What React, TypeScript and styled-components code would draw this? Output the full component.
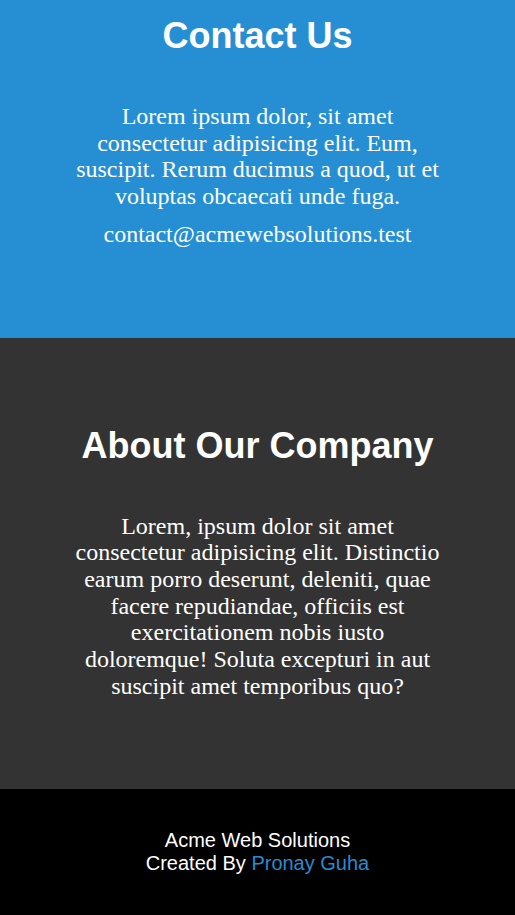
import styled, { createGlobalStyle } from 'styled-components';

const Global = createGlobalStyle`
  html, body {
    margin: 0;
    padding: 0;
  }

  body {
    font-family: "Liberation Serif", "Times New Roman", serif;
    color: #fff;
  }
`;

const Section = styled.section<{ $bg: string; $top: number; $bottom: number }>`
  background: ${p => p.$bg};
  padding: ${p => p.$top}px 0 ${p => p.$bottom}px;
  text-align: center;
`;

const Heading = styled.h1`
  margin: 0 0 47px;
  font-family: "Liberation Sans", Arial, sans-serif;
  font-size: 36px;
  font-weight: 700;
  line-height: 41px;
  color: #fff;
`;

const Content = styled.div`
  max-width: 372px;
  margin: 0 auto;
`;

const Text = styled.p`
  margin: 0;
  font-size: 24px;
  line-height: 26.7px;
  color: #fff;

  & + & {
    margin-top: 11px;
  }
`;

const Footer = styled.footer`
  background: #000;
  padding: 40px 0 42px;
  text-align: center;
  font-family: "Liberation Sans", Arial, sans-serif;
  font-size: 20px;
  line-height: 22.5px;
  color: #fff;
`;

const Line = styled.div``;

const Link = styled.a`
  color: #2a8ad0;
  text-decoration: none;
`;

const App = () => (
  <>
    <Global />
    <Section $bg="#268fd4" $top={15} $bottom={90}>
      <Heading>Contact Us</Heading>
      <Content>
        <Text>
          Lorem ipsum dolor, sit amet consectetur adipisicing elit. Eum, suscipit. Rerum
          ducimus a quod, ut et voluptas obcaecati unde fuga.
        </Text>
        <Text>contact@acmewebsolutions.test</Text>
      </Content>
    </Section>
    <Section $bg="#333333" $top={87} $bottom={90}>
      <Heading>About Our Company</Heading>
      <Content>
        <Text>
          Lorem, ipsum dolor sit amet consectetur adipisicing elit. Distinctio earum porro
          deserunt, deleniti, quae facere repudiandae, officiis est exercitationem nobis
          iusto doloremque! Soluta excepturi in aut suscipit amet temporibus quo?
        </Text>
      </Content>
    </Section>
    <Footer>
      <Line>Acme Web Solutions</Line>
      <Line>
        Created By <Link href="#">Pronay Guha</Link>
      </Line>
    </Footer>
  </>
);

export default App;
